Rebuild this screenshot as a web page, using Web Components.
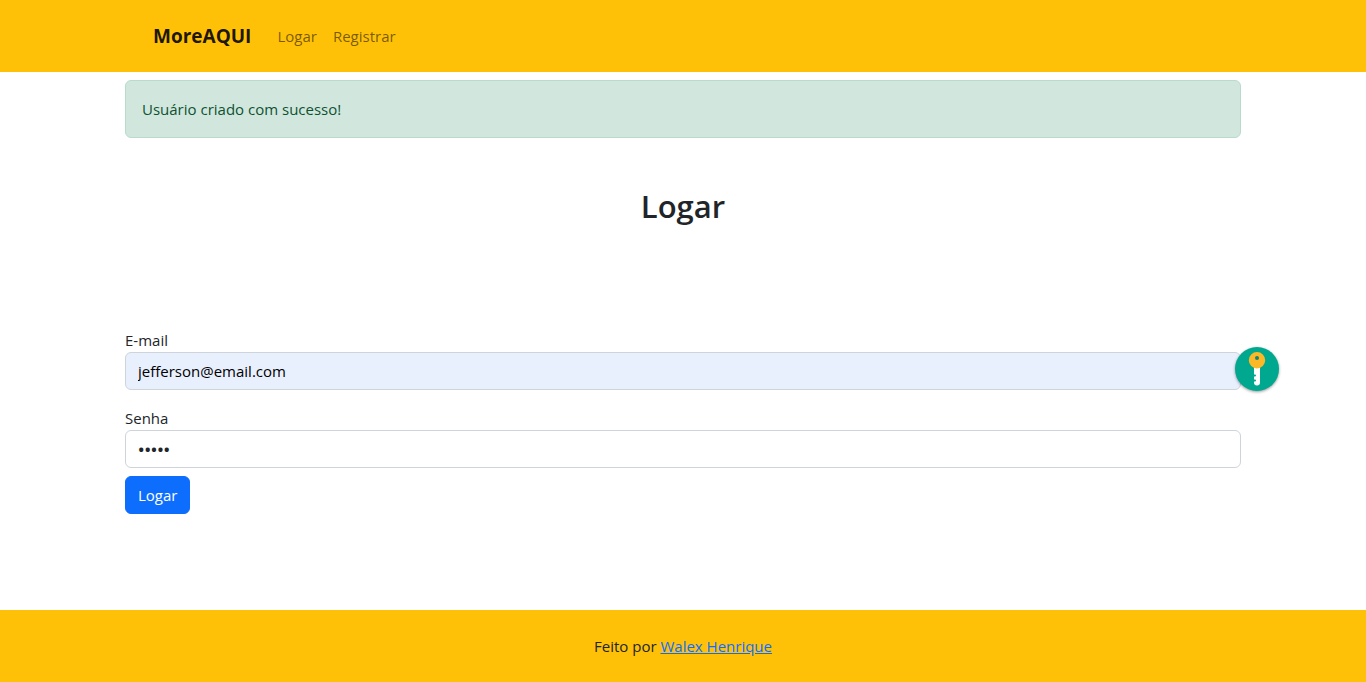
<!DOCTYPE html>
<html lang="pt-BR">
<head>
<meta charset="utf-8">
<meta name="viewport" content="width=device-width, initial-scale=1">
<title>MoreAQUI - Logar</title>
<style>
  body {
    margin: 0;
    background: #fff;
    color: #212529;
    font: 400 15px/24px "Open Sans", "Noto Sans", sans-serif;
  }
</style>
</head>
<body>
<more-page>
  <more-navbar slot="header" brand="MoreAQUI">
    <more-nav-link href="#logar">Logar</more-nav-link>
    <more-nav-link href="#registrar">Registrar</more-nav-link>
  </more-navbar>
  <more-alert>Usuário criado com sucesso!</more-alert>
  <more-title>Logar</more-title>
  <more-login></more-login>
  <more-footer slot="footer">Feito por <more-link href="#autor">Walex Henrique</more-link></more-footer>
</more-page>

<script>
const define = (name, render, setup) => customElements.define(name, class extends HTMLElement {
  connectedCallback() {
    if (this.shadowRoot) return;
    const template = document.createElement('template');
    template.innerHTML = '<style>*{box-sizing:border-box}</style>' + render(this);
    this.attachShadow({ mode: 'open' }).append(template.content.cloneNode(true));
    if (setup) setup(this);
  }
});

define('more-page', () => `
  <style>
    :host { display: flex; flex-direction: column; min-height: 100vh; }
    main { flex: 1; width: 100%; max-width: 1140px; margin: 0 auto; padding: 8px 12px; box-sizing: border-box; }
  </style>
  <slot name="header"></slot>
  <main><slot></slot></main>
  <slot name="footer"></slot>`);

define('more-navbar', el => `
  <style>
    :host { display: block; background: #ffc107; }
    nav { display: flex; align-items: center; gap: 18px; max-width: 1140px; min-height: 72px; margin: 0 auto; padding: 8px 40px; }
    .brand { color: rgba(0,0,0,.9); font-size: 19px; font-weight: 700; text-decoration: none; }
    .links { display: flex; }
  </style>
  <nav aria-label="Principal">
    <a class="brand" href="#inicio">${el.getAttribute('brand')}</a>
    <div class="links"><slot></slot></div>
  </nav>`);

define('more-nav-link', el => `
  <style>
    :host { display: block; }
    a { display: block; padding: 8px; color: rgba(0,0,0,.55); text-decoration: none; }
  </style>
  <a href="${el.getAttribute('href')}"><slot></slot></a>`);

define('more-alert', () => `
  <style>
    :host { display: block; }
    div { padding: 16px; border: 1px solid #badbcc; border-radius: 6px; background: #d1e7dd; color: #0f5132; }
  </style>
  <div role="alert"><slot></slot></div>`);

define('more-title', () => `
  <style>
    :host { display: block; padding: 48px 0 96px; }
    h1 { margin: 0; color: #212529; font-size: 31px; line-height: 40px; font-weight: 600; text-align: center; }
  </style>
  <h1><slot></slot></h1>`);

define('more-key', () => `
  <style>
    :host { display: block; }
    button { display: block; width: 44px; height: 44px; padding: 0; border: 0; border-radius: 50%; background: #00a88f; box-shadow: 0 1px 3px rgba(0,0,0,.4); }
    svg { display: block; }
  </style>
  <button type="button" aria-label="Gerenciador de senhas">
    <svg width="44" height="44" viewBox="0 0 44 44" aria-hidden="true">
      <path fill="#fff" d="M19 20h6v15.500a3 3 0 0 1-6 0v-1h1a1 1 0 0 0 0-2h-1v-3h1a1 1 0 0 0 0-2h-1z"/>
      <path fill="#fdb827" d="M22 5a8.200 8.200 0 1 1 0 16.400A8.200 8.200 0 0 1 22 5z"/>
      <circle cx="22" cy="11" r="2" fill="#138575"/>
    </svg>
  </button>`);

define('more-login', () => `
  <style>
    :host { display: block; padding: 6px 0 32px; }
    form { display: flex; flex-direction: column; align-items: stretch; }
    label { display: block; }
    .field { position: relative; margin-bottom: 16px; }
    .field.last { margin-bottom: 8px; }
    input { display: block; width: 100%; height: 38px; padding: 6px 12px; border: 1px solid #ced4da; border-radius: 6px; background: #fff; color: #212529; font: inherit; outline: 0; }
    .filled { background: #e8f0fe; color: #000; }
    input[type=password] { font-size: 17px; font-weight: 600; }
    more-key { position: absolute; right: -38px; bottom: -1px; }
    .submit { align-self: flex-start; height: 38px; padding: 6px 12px; border: 1px solid #0d6efd; border-radius: 6px; background: #0d6efd; color: #fff; font: inherit; }
  </style>
  <form>
    <div class="field">
      <label for="email">E-mail</label>
      <input class="filled" id="email" type="email" value="jefferson@email.com" autocomplete="username">
      <more-key></more-key>
    </div>
    <div class="field last">
      <label for="senha">Senha</label>
      <input id="senha" type="password" value="senha" autocomplete="current-password">
    </div>
    <button class="submit" type="submit">Logar</button>
  </form>`, el => el.shadowRoot.querySelector('form').addEventListener('submit', e => e.preventDefault()));

define('more-link', el => `
  <style>
    :host { display: inline; }
    a { color: #0d6efd; text-decoration: underline; }
  </style>
  <a href="${el.getAttribute('href')}"><slot></slot></a>`);

define('more-footer', () => `
  <style>
    :host { display: block; background: #ffc107; }
    footer { padding: 24px; text-align: center; }
  </style>
  <footer><slot></slot></footer>`);
</script>
</body>
</html>
